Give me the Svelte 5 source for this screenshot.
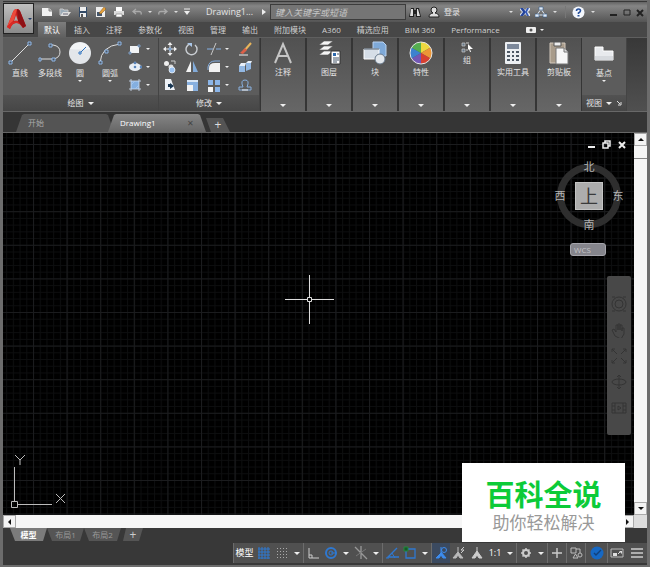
<script>
    let activeTab = $state('默认');
    let activeFile = $state('Drawing1');
    let activeLayout = $state('模型');
    let search = $state('');

    const tabs = [
        '默认', '插入', '注释', '参数化', '视图', '管理', '输出',
        '附加模块', 'A360', '精选应用', 'BIM 360', 'Performance',
    ];

    const drawTools = [
        { icon: 'line', label: '直线' },
        { icon: 'polyline', label: '多段线' },
        { icon: 'circle', label: '圆', more: true },
        { icon: 'arc', label: '圆弧', more: true },
    ];

    const shapeTools = ['rectangle', 'ellipse', 'hatch'];

    const modifyTools = [
        { icon: 'move', label: '移动' },
        { icon: 'rotate', label: '旋转' },
        { icon: 'trim', label: '修剪', more: true },
        { icon: 'erase', label: '删除' },
        { icon: 'copy', label: '复制' },
        { icon: 'mirror', label: '镜像' },
        { icon: 'fillet', label: '圆角', more: true },
        { icon: 'explode', label: '分解' },
        { icon: 'stretch', label: '拉伸' },
        { icon: 'scale', label: '缩放' },
        { icon: 'array', label: '阵列', more: true },
        { icon: 'offset', label: '偏移' },
    ];

    const panels = [
        { icon: 'text', label: '注释' },
        { icon: 'layers', label: '图层' },
        { icon: 'block', label: '块' },
        { icon: 'colors', label: '特性' },
        { icon: 'group', label: '组' },
        { icon: 'calculator', label: '实用工具' },
        { icon: 'clipboard', label: '剪贴板' },
    ];

    const quickTools = ['new', 'open', 'save', 'saveas', 'print'];

    const status = [
        [{ text: '模型' }, { icon: 'grid' }, { icon: 'snap' }, { drop: true }],
        [{ icon: 'ortho' }, { icon: 'polar' }, { drop: true }, { icon: 'iso' }, { drop: true }],
        [{ icon: 'track' }, { icon: 'osnap' }, { drop: true }],
        [{ icon: 'person', on: true }, { icon: 'personAuto' }, { icon: 'personScale' }, { text: '1:1' }, { drop: true }],
        [{ icon: 'gear' }, { drop: true }],
        [{ icon: 'plus' }],
        [{ icon: 'isolate' }],
        [{ icon: 'hardware', wide: true }],
        [{ icon: 'fullscreen' }, { icon: 'menu', wide: true }],
    ];

    // name: [width, height, svg body]
    const icons = {
        logo: [20, 22, '<path d="M1 19 7 4q1-3 4-3 2 0 3 2l6 15-3 2q-3-5-7-5-4 0-6 6z" fill="#c9201f"/><path d="M11 1q2 0 3 2l6 15-3 2-5-7z" fill="#8f1216"/><path d="M7 4q1-3 4-3L8 12l-7 7z" fill="#ec4a3c"/><path d="M10 7l2 6q-2-1-4 0z" fill="#a9a9a9"/><path d="M1 19q4-6 10-6l6 7q-3-5-7-5-4 0-6 6z" fill="#d92a25"/>'],
        new: [12, 12, '<path d="M1 2h7l3 3v5H1z" fill="#f2f2f2"/><path d="M8 2v3h3" fill="#bbb" stroke="#888"/>'],
        open: [12, 12, '<path d="M1 9V3h3l1 1h4v2" fill="#9aabb8" stroke="#c4c4c4"/><path d="M1 10l3-4h8l-3 4z" fill="#ddd"/><path d="M4 8h5" stroke="#667"/>'],
        save: [12, 12, '<path d="M2 1h8v10H2z" fill="#334a66"/><path d="M3 1h6v4H3zM3 7h6v4H3z" fill="#eee"/><path d="M4 8h2v3H4z" fill="#555"/>'],
        saveas: [12, 12, '<path d="M1 1h9v10H1z" fill="#eee"/><path d="M2 6h5v4H2z" fill="#45566b"/><path d="M4 7l5-6 2 2-5 5z" fill="#e6a13a" stroke="#7b5420" stroke-width=".5"/>'],
        print: [12, 12, '<path d="M3 1h6v4H3z" fill="#fff"/><path d="M1 5h10v4H1z" fill="#ddd"/><path d="M3 8h6v3H3z" fill="#fff" stroke="#777" stroke-width=".6"/>'],
        undo: [12, 12, '<path d="M5 3 2 5.500 5 8M2 5.500h6q3 0 2 3" fill="none" stroke="#aaa" stroke-width="1.300"/>'],
        redo: [12, 12, '<path d="M7 3l3 2.500L7 8M10 5.500H4q-3 0-2 3" fill="none" stroke="#aaa" stroke-width="1.300"/>'],
        custom: [8, 8, '<path d="M1 1h6" stroke="#eee"/><path d="M1 3h6L4 7z" fill="#eee"/>'],
        binoculars: [12, 12, '<path d="M2 2h3v2h2V2h3l2 9H7V8H5v3H0z" fill="#222"/><path d="M2 3h2v7H1zM8 3h1l2 7H8z" fill="#ddd"/>'],
        user: [12, 12, '<circle cx="6" cy="4" r="3" fill="#ddd" stroke="#222"/><path d="M1 11q0-4 5-4t5 4z" fill="#ddd" stroke="#222"/><path d="M5 5h2v3H5z" fill="#ddd"/>'],
        exchange: [12, 12, '<path d="M1 2h3l2 2 2-2h3v2L9 6l2 2v2H8L6 8l-2 2H1V8l2-2-2-2z" fill="#dde4ef"/><path d="M1 2h3l3 4-3 4H1l3-4z" fill="#24439b"/><path d="M8 2h2L8 6l2 4H8L6 6z" fill="#3659b5"/>'],
        share: [12, 12, '<path d="M6 3 2 9h8z" fill="none" stroke="#dfe8f2"/><path d="M4 1h4v3H4zM0 8h4v3H0zM8 8h4v3H8z" fill="#e2ebf5" stroke="#345a8f" stroke-width=".6"/>'],
        help: [13, 13, '<circle cx="6.500" cy="6.500" r="6" fill="#f4f7fc"/><path d="M4.500 5q0-2 2-2t2 1.700q0 1-2 2.300v1" fill="none" stroke="#27509b" stroke-width="1.600"/><path d="M5.500 9h2v1.500h-2z" fill="#27509b"/>'],
        minimize: [9, 9, '<path d="M1 7h7" stroke="currentColor" stroke-width="2"/>'],
        maximize: [9, 9, '<path d="M2 2h6v5H2z" fill="none" stroke="currentColor"/>'],
        restore: [9, 9, '<path d="M3 3V1h5v5H6M1 3h5v5H1z" fill="none" stroke="currentColor" stroke-width="1.500"/>'],
        close: [9, 9, '<path d="M2 2l6 6M8 2 2 8" stroke="currentColor" stroke-width="2"/>'],
        camera: [10, 6, '<rect width="10" height="6" rx="1" fill="#eee"/><circle cx="5" cy="3" r="1.500" fill="#555"/>'],
        line: [24, 24, '<path d="M2 22 22 2" stroke="#ddd"/><path d="M1 20h3v3H1zM20 1h3v3h-3z" fill="#4d5661" stroke="#8fb7e8"/>'],
        polyline: [24, 24, '<path d="M2 18h13q7-1 7-7t-7-7h-4" fill="none" stroke="#ddd"/><path d="M1 17h2v3H1zM14 17h3v3h-3zM11 3h3v3h-3z" fill="#4d5661" stroke="#8fb7e8"/>'],
        circle: [24, 24, '<circle cx="12" cy="12" r="11" fill="#e3e6ea"/><path d="M2 8a11 11 0 0 1 20 0q-9 1-20 0" fill="#f2f4f6"/><path d="M12 12l6-6" stroke="#2d71bd"/><path d="M11 11h2v2h-2z" fill="#fff" stroke="#2d71bd"/>'],
        arc: [24, 24, '<path d="M2 22Q3 5 22 3" fill="none" stroke="#ddd"/><path d="M1 20h3v3H1zM7 9h3v3H7zM20 1h3v3h-3z" fill="#4d5661" stroke="#8fb7e8"/>'],
        rectangle: [14, 14, '<path d="M2 4h9v7H2z" fill="#f1f3f5"/><path d="M1 10h2v2H1zM10 3h2v2h-2z" fill="#4d5661" stroke="#8fb7e8" stroke-width=".7"/>'],
        ellipse: [14, 14, '<ellipse cx="7" cy="7" rx="6" ry="4" fill="#e9eef4"/><path d="M6 2h2v2H6zM6 6h2v2H6zM12 6h2v2h-2z" fill="#335f94" stroke="#8fb7e8" stroke-width=".5"/>'],
        hatch: [14, 14, '<path d="M3 3h8v8H3z" fill="#84afe0"/><path d="M1 3h12M1 11h12M3 1v12M11 1v12" stroke="#cfe0f5" stroke-width=".8"/><path d="M3 7l4-4M7 11l4-4" stroke="#a9c8ec" stroke-width=".8"/>'],
        move: [14, 14, '<path d="M7 0l2.500 3h-5zM7 14l2.500-3h-5zM0 7l3-2.500v5zM14 7l-3-2.500v5z" fill="#f1f1f1"/><path d="M7 2v10M2 7h10" stroke="#eee"/><path d="M6 6h2v2H6z" fill="#4d5661" stroke="#8fb7e8"/>'],
        rotate: [14, 14, '<path d="M5 2a5.500 5.500 0 1 0 5 1" fill="none" stroke="#c9cdd2" stroke-width="1.400"/><path d="M2 1h5v4z" fill="#a9c6e8"/>'],
        trim: [14, 14, '<path d="M0 7h6M9 7h5" stroke="#84b0e5"/><path d="M9 1 4 13" stroke="#c7c7c7"/>'],
        erase: [14, 14, '<path d="M13 1 6 9" stroke="#e8b55c" stroke-width="2"/><path d="M7 6l2 2-4 4-3-1z" fill="#dd6048"/><path d="M1 13h9" stroke="#eee"/>'],
        copy: [14, 14, '<circle cx="3.500" cy="3.500" r="2.500" fill="#eee"/><circle cx="8" cy="7" r="2.500" fill="#ddd"/><circle cx="9" cy="10" r="3" fill="#9cc4f3" stroke="#fff" stroke-width=".7"/><path d="M8 1h4v3" fill="none" stroke="#ccc"/>'],
        mirror: [14, 14, '<path d="M6 1v11H1z" fill="#f3f3f3"/><path d="M8 1v11h5z" fill="#82abd9"/>'],
        fillet: [14, 14, '<path d="M2 12V8q0-5 6-5h5v9z" fill="#f1f1f1"/><path d="M1 10V7q1-6 7-6h5" fill="none" stroke="#85aee0"/>'],
        explode: [14, 14, '<path d="M1 6h6v6H1zM8 3l5-1v7l-5 2z" fill="#92b7e2"/><path d="M1 6l2-3h5l-1 3zM8 3l2-2h4l-1 2z" fill="#e7effa"/>'],
        stretch: [14, 14, '<path d="M2 1h6l4 11H2z" fill="#eef2f7"/><path d="M5 6h2V5l4 3-4 3V9H5z" fill="#183652"/>'],
        scale: [14, 14, '<path d="M2 2h11v11H8V7H2z" fill="#88b0df"/><path d="M2 7h6v6H2z" fill="#f3f3f3"/><path d="M2 2h11v2H2z" fill="#d9e6f5"/>'],
        array: [14, 14, '<path d="M1 2h5v5H1zM8 2h5v5H8zM8 9h5v5H8z" fill="#8bb5e8"/><path d="M1 9h5v5H1z" fill="#f3f3f3"/>'],
        offset: [14, 14, '<path d="M1 12h12V9H9q3-7-2-7T5 9H1z" fill="none" stroke="#88b0df"/><path d="M4 12h6" stroke="#eee"/>'],
        text: [24, 24, '<path d="M4 22 12 3l8 19M7 15h10" fill="none" stroke="#c6c6c6" stroke-width="2"/>'],
        layers: [24, 24, '<path d="M2 4l5-4h9l-5 4zM2 9l5-4h9l-5 4zM2 14l5-4h9l-5 4z" fill="#f4f4f4" stroke="#555" stroke-width=".6"/><path d="M14 10h9v13h-9z" fill="#fff" stroke="#333"/><path d="M16 12h3v3h-3z" fill="#2d69ad"/><path d="M20 13h2M16 17h6M16 19h6M16 21h4" stroke="#456"/>'],
        block: [24, 24, '<path d="M10 1h10l3 3v11H10z" fill="#7ea9d8" stroke="#b9d2ef"/><path d="M1 8h15v10H1z" fill="#d6dee7" stroke="#fff"/><path d="M1 8h15" stroke="#456"/><circle cx="17" cy="18" r="5" fill="#e2e7ec" stroke="#68798c"/>'],
        colors: [24, 24, '<path d="M12 12V1A11 11 0 0 1 21.500 6.500z" fill="#eed83f"/><path d="M12 12l9.500-5.500a11 11 0 0 1 0 11z" fill="#ed9636"/><path d="M12 12l9.500 5.500A11 11 0 0 1 12 23z" fill="#d84031"/><path d="M12 12v11a11 11 0 0 1-9.500-5.500z" fill="#7357b5"/><path d="M12 12l-9.500 5.500a11 11 0 0 1 0-11z" fill="#3d82cf"/><path d="M12 12 2.500 6.500A11 11 0 0 1 12 1z" fill="#55ae50"/><circle cx="12" cy="12" r="11" fill="none" stroke="#e6e6e6"/>'],
        group: [12, 12, '<path d="M1 2h3v3H1zM1 8h3v3H1z" fill="#678" stroke="#ccc" stroke-width=".7"/><path d="M5 2h3M5 9h2" stroke="#ccc"/><path d="M7 3l5 5H9l1 3H9L8 8 7 9z" fill="#fff"/>'],
        calculator: [24, 24, '<rect x="4" y="1" width="16" height="22" rx="1" fill="#eceff2"/><path d="M6 3h12v5H6z" fill="#7c889a"/><path d="M6 10h3v2H6zM11 10h2v2h-2zM15 10h3v2h-3zM6 14h3v2H6zM11 14h2v2h-2zM15 14h3v2h-3zM6 18h3v2H6zM11 18h2v2h-2zM15 18h3v2h-3z" fill="#4d5864"/>'],
        clipboard: [24, 24, '<path d="M3 2h15v20H3z" fill="#a99c8b" stroke="#d2c8bc"/><path d="M7 1h7v4H7z" fill="#eee" stroke="#555"/><path d="M9 7h8l4 4v12H9z" fill="#f7f7f7" stroke="#777"/><path d="M17 7v4h4" fill="#ddd" stroke="#777"/>'],
        base: [24, 24, '<path d="M3 6h8v4h10v9H3z" fill="#e8eaed" stroke="#fff"/><path d="M3 15h18v4H3z" fill="#d7dade"/>'],
        launcher: [6, 6, '<path d="M1 1l3 3M5 2v3H2" fill="none" stroke="#ddd"/>'],
        grid: [14, 14, '<path d="M2 1v12M5 1v12M8 1v12M11 1v12M1 3h12M1 6h12M1 9h12M1 12h12" stroke="#2f78d0"/>'],
        snap: [14, 14, '<path d="M2 2.500h11M2 5.500h11M2 8.500h11M2 11.500h11" stroke="#aaa" stroke-dasharray="1 2"/>'],
        ortho: [14, 14, '<path d="M3 2v10h10M3 9h3v3" fill="none" stroke="#ccc"/>'],
        polar: [14, 14, '<circle cx="7" cy="7" r="5" fill="none" stroke="#2f78d0" stroke-width="2"/><circle cx="7" cy="7" r="2" fill="none" stroke="#2f78d0"/><path d="M7 7h6" stroke="#2f78d0"/>'],
        iso: [14, 14, '<path d="M1 1l12 12M7 0v13" stroke="#999" stroke-width="1.300"/><path d="M12 3 2 10" stroke="#777"/>'],
        track: [14, 14, '<path d="M12 2 3 11h11" fill="none" stroke="#2f78d0" stroke-width="1.400"/><path d="M1 12h3M7 7l3 5" stroke="#2f78d0"/>'],
        osnap: [14, 14, '<path d="M3 3h9v9H3z" fill="none" stroke="#2f78d0" stroke-width="1.300"/><path d="M1 1h4v4H1z" fill="#195829" stroke="#238a3e"/>'],
        person: [14, 14, '<path d="M7 1v7M7 7l-5 5h3l2-3 2 3h3L7 6" fill="#3c8cf0" stroke="#3c8cf0"/><circle cx="10" cy="4" r="2.500" fill="none" stroke="#3c8cf0"/>'],
        personAuto: [14, 14, '<path d="M6 1v7M6 6l-5 6h3l2-3 2 3h3L6 6" fill="#bbb" stroke="#bbb"/><path d="M12 1 9 4h3L9 7" fill="none" stroke="#ccc"/>'],
        personScale: [14, 14, '<path d="M7 1v7M7 5l-5 7h3l2-3 2 3h3L7 5" fill="#ccc" stroke="#ccc"/>'],
        gear: [14, 14, '<circle cx="7" cy="7" r="3" fill="none" stroke="#ccc" stroke-width="2"/><path d="M7 2v2M7 10v2M2 7h2M10 7h2M3.500 3.500l1.500 1.500M9 9l1.500 1.500M10.500 3.500 9 5M5 9l-1.500 1.500" stroke="#ccc" stroke-width="1.500"/>'],
        plus: [14, 14, '<path d="M7 2v10M2 7h10" stroke="#ccc" stroke-width="1.400"/>'],
        isolate: [14, 14, '<path d="M2 2h5v5H2zM7 3h4v4" fill="none" stroke="#bbb"/><circle cx="11" cy="9" r="2" fill="none" stroke="#bbb"/><path d="M4 12h5L6.500 8z" fill="none" stroke="#bbb"/>'],
        hardware: [14, 14, '<circle cx="7" cy="7" r="6.500" fill="#1668c4"/><path d="M4 7l2 2 5-5" fill="none" stroke="#12407a" stroke-width="1.400"/>'],
        fullscreen: [14, 14, '<path d="M1 3h12v8H1z" fill="none" stroke="#bbb"/><path d="M3 7h4v3H3zM9 5h3v3z" fill="#ddd"/><path d="M8 8l3-3" stroke="#ddd"/>'],
        menu: [14, 14, '<path d="M1 3h12M1 7h12M1 11h12" stroke="#ccc" stroke-width="1.400"/>'],
        wheel: [16, 16, '<circle cx="8" cy="8" r="7" fill="none" stroke="#343434"/><circle cx="8" cy="8" r="4" fill="none" stroke="#343434"/><path d="M1 1h3M12 1h3M1 15h3M12 15h3" stroke="#343434"/>'],
        pan: [16, 16, '<path d="M4 14 1 8l2-1 2 3V3h2v5-6h2v6-5h2v6-3h2v6l-3 5z" fill="none" stroke="#343434"/>'],
        zoom: [16, 16, '<path d="M1 1l5 5M15 1l-5 5M1 15l5-5M15 15l-5-5M1 4V1h3M12 1h3v3M4 15H1v-3M12 15h3v-3" fill="none" stroke="#343434"/>'],
        orbit: [16, 16, '<ellipse cx="8" cy="8" rx="7" ry="3" fill="none" stroke="#343434"/><path d="M8 1v14M6 3l2-2 2 2M6 13l2 2 2-2" fill="none" stroke="#343434"/>'],
        motion: [16, 16, '<path d="M1 3h14v10H1zM4 3v10M12 3v10M1 6h3M1 10h3M12 6h3M12 10h3M7 6l3 2-3 2z" fill="none" stroke="#343434"/>'],
    };
</script>

{#snippet icon(name)}
    <svg width={icons[name][0]} height={icons[name][1]} viewBox="0 0 {icons[name][0]} {icons[name][1]}" aria-hidden="true">
        {@html icons[name][2]}
    </svg>
{/snippet}

<div class="window">
    <button class="app-button" aria-label="应用程序菜单">
        {@render icon('logo')}
        <span class="arrow small dark"></span>
    </button>

    <header class="titlebar">
        <div class="quick">
            {#each quickTools as name}
                <button aria-label={name}>{@render icon(name)}</button>
            {/each}
            <button aria-label="undo">{@render icon('undo')}</button>
            <button class="dot" aria-label="undo list"></button>
            <button aria-label="redo">{@render icon('redo')}</button>
            <button class="dot" aria-label="redo list"></button>
            <button class="custom" aria-label="customize">{@render icon('custom')}</button>
        </div>
        <span class="doc-title">Drawing1...</span>
        <span class="arrow-right"></span>
        <input class="search" type="text" placeholder="键入关键字或短语" aria-label="搜索" bind:value={search} />
        <button class="find" aria-label="find">{@render icon('binoculars')}</button>
        <button class="login">{@render icon('user')}登录</button>
        <div class="account">
            <button class="dot" aria-label="account list"></button>
            <button aria-label="exchange">{@render icon('exchange')}</button>
            <button aria-label="A360">{@render icon('share')}</button>
            <button class="dot" aria-label="A360 list"></button>
            <span class="divider"></span>
            <button aria-label="help">{@render icon('help')}</button>
            <button class="dot" aria-label="help list"></button>
        </div>
        <div class="window-controls">
            <button aria-label="minimize">{@render icon('minimize')}</button>
            <button aria-label="maximize">{@render icon('maximize')}</button>
            <button aria-label="close">{@render icon('close')}</button>
        </div>
    </header>

    <nav class="tabs">
        {#each tabs as tab}
            <button class:active={tab === activeTab} onclick={() => (activeTab = tab)}>{tab}</button>
        {/each}
        <button class="camera" aria-label="ribbon display">
            {@render icon('camera')}
            <span class="arrow small"></span>
        </button>
    </nav>

    <div class="ribbon">
        <section class="panel draw">
            <div class="panel-body">
                {#each drawTools as tool}
                    <button class="tool">
                        {@render icon(tool.icon)}
                        <span>{tool.label}</span>
                        {#if tool.more}<span class="arrow small"></span>{/if}
                    </button>
                {/each}
                <div class="shapes">
                    {#each shapeTools as name}
                        <button class="mini" aria-label={name}>{@render icon(name)}<span class="arrow small"></span></button>
                    {/each}
                </div>
            </div>
            <button class="panel-title">绘图 <span class="arrow"></span></button>
        </section>

        <section class="panel modify">
            <div class="panel-body modify-grid">
                {#each modifyTools as tool}
                    <button class="mini" aria-label={tool.label}>
                        {@render icon(tool.icon)}
                        {#if tool.more}<span class="arrow small"></span>{/if}
                    </button>
                {/each}
            </div>
            <button class="panel-title">修改 <span class="arrow"></span></button>
        </section>

        {#each panels as panel}
            <button class="collapsed">
                {@render icon(panel.icon)}
                <span>{panel.label}</span>
                <span class="arrow"></span>
            </button>
        {/each}

        <section class="panel base">
            <div class="panel-body">
                <button class="tool">
                    {@render icon('base')}
                    <span>基点</span>
                    <span class="arrow small"></span>
                </button>
            </div>
            <button class="panel-title">视图 <span class="arrow"></span>{@render icon('launcher')}</button>
        </section>
    </div>

    <div class="files">
        {#each ['开始', 'Drawing1'] as file}
            <button class="file" class:active={file === activeFile} onclick={() => (activeFile = file)}>
                <span>{file}</span>
                {#if file === activeFile}<span class="x">✕</span>{/if}
            </button>
        {/each}
        <button class="file add" aria-label="new drawing">+</button>
    </div>

    <main class="workspace">
        <div class="canvas">
            <svg class="lines" width="100%" height="100%" aria-hidden="true">
                <defs>
                    <pattern id="minor" x="30" y="11" width="6.72" height="6.72" patternUnits="userSpaceOnUse">
                        <path d="M.5 0v6.720M0 .5h6.720" stroke="#0d0e0f" />
                    </pattern>
                    <pattern id="major" x="30" y="11" width="33.6" height="33.6" patternUnits="userSpaceOnUse">
                        <path d="M.5 0v33.600M0 .5h33.600" stroke="#1b1c1e" />
                    </pattern>
                </defs>
                <rect width="100%" height="100%" fill="url(#minor)" />
                <rect width="100%" height="100%" fill="url(#major)" />
            </svg>

            <svg class="crosshair" width="49" height="49" aria-hidden="true">
                <path d="M0 24.500h22M27 24.500h22M24.500 0v22M24.500 27v22M22.500 22.500h4v4h-4z" fill="none" stroke="#ddd" />
            </svg>

            <svg class="ucs" width="60" height="60" aria-hidden="true">
                <path d="M5.500 13v34M8 50.500h35M2.500 47.500h6v6h-6zM6 1l5 5 5-5M11 6v5M47 40l9 9M56 40l-9 9" fill="none" stroke="#bbb" />
            </svg>

            <div class="doc-controls">
                <button aria-label="minimize drawing">{@render icon('minimize')}</button>
                <button aria-label="restore drawing">{@render icon('restore')}</button>
                <button aria-label="close drawing">{@render icon('close')}</button>
            </div>

            <div class="cube">
                <div class="ring"></div>
                <button class="n">北</button>
                <button class="w">西</button>
                <button class="top">上</button>
                <button class="e">东</button>
                <button class="s">南</button>
            </div>
            <button class="wcs">WCS</button>

            <div class="navbar">
                {#each ['wheel', 'pan', 'zoom', 'orbit', 'motion'] as name}
                    <button aria-label={name}>{@render icon(name)}</button>
                {/each}
            </div>
        </div>

        <div class="scroll vertical">
            <button aria-label="scroll up"><span class="tri up"></span></button>
            <span class="thumb"></span>
            <button class="last" aria-label="scroll down"><span class="tri down"></span></button>
        </div>
        <div class="scroll horizontal">
            <button aria-label="scroll left"><span class="tri left"></span></button>
            <button class="last" aria-label="scroll right"><span class="tri right"></span></button>
        </div>
        <div class="corner"></div>
    </main>

    <div class="layouts">
        {#each ['模型', '布局1', '布局2'] as layout}
            <button class:active={layout === activeLayout} onclick={() => (activeLayout = layout)}>{layout}</button>
        {/each}
        <button class="add" aria-label="new layout">+</button>
    </div>

    <footer class="statusbar">
        {#each status as group}
            <div class="status-group">
                {#each group as item}
                    {#if item.drop}
                        <button class="drop" aria-label="options"><span class="arrow"></span></button>
                    {:else if item.text}
                        <button class="label" class:wide={item.text === '模型'}>{item.text}</button>
                    {:else}
                        <button class:on={item.on} class:wide={item.wide} aria-label={item.icon}>{@render icon(item.icon)}</button>
                    {/if}
                {/each}
            </div>
        {/each}
    </footer>

    <aside class="banner">
        <strong>百科全说</strong>
        <span>助你轻松解决</span>
    </aside>
</div>

<style>
    :global(body) {
        background: #383838;
    }

    .window {
        position: relative;
        display: flex;
        flex-direction: column;
        box-sizing: border-box;
        min-height: 100vh;
        padding: 1px 0 2px;
        border: solid #6c6c6c;
        border-width: 1px 3px 2px;
        background: #383838;
        color: #e4e4e4;
        font-family: "Open Sans", "Noto Sans CJK SC", sans-serif;
        font-size: 8px;
        line-height: 12px;
    }

    button {
        display: flex;
        align-items: center;
        justify-content: center;
        flex-shrink: 0;
        margin: 0;
        padding: 0;
        border: 0;
        background: none;
        color: inherit;
        font: inherit;
        white-space: nowrap;
    }

    svg {
        display: block;
        flex-shrink: 0;
    }

    /* Arrows */
    .arrow {
        display: inline-block;
        flex-shrink: 0;
        border: 3px solid transparent;
        border-top-color: #eee;
        border-bottom: 0;
    }

    .arrow.small {
        border-width: 2px 2px 0;
    }

    .arrow.dark {
        border-top-color: #223a66;
    }

    .arrow-right {
        border: 3px solid transparent;
        border-left: 4px solid #eee;
        border-right: 0;
    }

    /* Title bar */
    .app-button {
        position: absolute;
        top: 2px;
        left: 0;
        z-index: 2;
        gap: 2px;
        width: 31px;
        height: 31px;
        border: 1px solid #222;
        background: linear-gradient(#c0c0c0, #8a8a8a);
    }

    .titlebar {
        display: flex;
        align-items: center;
        height: 20px;
        padding-left: 35px;
        background: linear-gradient(#646464, #858585 20%, #555);
    }

    .quick,
    .account,
    .window-controls {
        display: flex;
        align-items: center;
    }

    .quick button {
        width: 18px;
    }

    .quick .dot,
    .account .dot {
        width: 8px;
    }

    .dot::after {
        content: "";
        border: 2px solid transparent;
        border-top-color: #ddd;
        border-bottom: 0;
    }

    .quick .custom {
        width: 14px;
    }

    .doc-title {
        width: 56px;
        margin-left: 12px;
        font-size: 9px;
    }

    .search {
        flex: 1 1 134px;
        min-width: 0;
        max-width: 136px;
        height: 16px;
        box-sizing: border-box;
        margin: 0 3px 0 4px;
        padding: 0 4px;
        border: 1px solid #3c3c3c;
        background: #757575;
        color: #eee;
        font: italic 9px/12px "Open Sans", "Noto Sans CJK SC", sans-serif;
    }

    .search::placeholder {
        color: #c6c6c6;
        opacity: 1;
    }

    .login {
        gap: 4px;
        margin-left: 7px;
    }

    .account {
        gap: 4px;
        margin-left: auto;
    }

    .divider {
        width: 1px;
        height: 12px;
        margin: 0 2px;
        background: #777;
    }

    .window-controls {
        gap: 4px;
        margin: 0 3px 0 12px;
        color: #222;
    }

    /* Ribbon tabs */
    .tabs {
        display: flex;
        height: 15px;
        padding-left: 35px;
        background: #474747;
        border-bottom: 1px solid #5f5f5f;
    }

    .tabs button {
        padding: 0 8px;
        color: #d0d0d0;
    }

    .tabs .active {
        padding: 0 6px;
        background: linear-gradient(#7d7d7d, #606060);
        color: #fff;
    }

    .tabs .camera {
        gap: 4px;
        margin-left: 10px;
    }

    /* Ribbon */
    .ribbon {
        display: flex;
        height: 73px;
        border-bottom: 1px solid #686868;
        background: linear-gradient(#383838, #505050);
    }

    .panel {
        display: flex;
        flex-direction: column;
        flex-shrink: 0;
        border-right: 1px solid #444;
        background: #5c5c5c;
    }

    .draw {
        width: 155px;
    }

    .modify {
        width: 100px;
    }

    .base {
        width: 44px;
    }

    .panel-body {
        display: flex;
        flex: 1;
        padding-left: 2px;
    }

    .base .panel-body {
        justify-content: center;
        padding: 0;
    }

    .panel-title {
        gap: 4px;
        height: 16px;
        background: linear-gradient(#525252, #464646);
    }

    .tool {
        flex-direction: column;
        justify-content: flex-start;
        width: 30px;
        padding-top: 3px;
    }

    .tool > span:not(.arrow) {
        margin-top: 2px;
    }

    .tool .arrow {
        margin-top: 1px;
    }

    .mini {
        gap: 4px;
        justify-content: flex-start;
        height: 18px;
    }

    .shapes {
        padding: 2px 0 0 3px;
    }

    .modify-grid {
        display: grid;
        grid-template-columns: 22px 22px 31px 18px;
        grid-template-rows: repeat(3, 18px);
        padding: 2px 0 0 4px;
    }

    .collapsed {
        flex-direction: column;
        justify-content: flex-start;
        box-sizing: border-box;
        width: 46px;
        padding: 3px 0 4px;
        border: solid #353535;
        border-width: 0 1px;
        background: linear-gradient(#515151, #666);
    }

    .collapsed > span:not(.arrow) {
        margin-top: 1px;
    }

    .collapsed .arrow {
        margin-top: auto;
    }

    /* File tabs */
    .files {
        display: flex;
        align-items: flex-end;
        height: 20px;
        padding-left: 13px;
        background: #353535;
        border-bottom: 1px solid #666;
    }

    .file {
        justify-content: space-between;
        box-sizing: border-box;
        width: 98px;
        height: 18px;
        padding: 0 12px;
        background: #545454;
        color: #aaa;
        clip-path: polygon(6px 1px, 8px 0, 90px 0, 92px 1px, 100% 100%, 0 100%);
    }

    .file.active {
        margin-left: -6px;
        background: linear-gradient(#858585, #666);
        color: #fff;
    }

    .file .x {
        color: #444;
    }

    .file.add {
        justify-content: center;
        width: 22px;
        height: 14px;
        color: #ddd;
        font-size: 12px;
        clip-path: polygon(0 0, 17px 0, 100% 100%, 5px 100%);
    }

    /* Drawing area */
    .workspace {
        display: grid;
        flex: 1;
        grid-template-columns: 1fr 13px;
        grid-template-rows: 1fr 13px;
    }

    .canvas {
        position: relative;
        min-height: 320px;
        overflow: hidden;
        background: #000;
    }

    .lines {
        position: absolute;
        inset: 0;
    }

    .crosshair {
        position: absolute;
        top: 142px;
        left: 282px;
    }

    .ucs {
        position: absolute;
        bottom: 1px;
        left: 6px;
    }

    .doc-controls {
        position: absolute;
        top: 7px;
        right: 8px;
        display: flex;
        gap: 6px;
        color: #eee;
    }

    .cube {
        position: absolute;
        top: 26px;
        right: 8px;
        display: grid;
        grid-template-columns: 16px 1fr 16px;
        grid-template-rows: 16px 1fr 16px;
        width: 74px;
        height: 74px;
        color: #b5b5b5;
        font-size: 11px;
    }

    .ring {
        position: absolute;
        inset: 5px;
        border: 7px solid #2e2e2e;
        border-radius: 50%;
    }

    .cube button {
        position: relative;
    }

    .n,
    .s {
        grid-column: 2;
    }

    .w {
        grid-column: 1;
    }

    .cube .top {
        place-self: center;
        width: 28px;
        height: 28px;
        border: 1px solid #c4c4c4;
        background: #adadad;
        color: #3a3a3a;
        font-size: 18px;
    }

    .wcs {
        position: absolute;
        top: 110px;
        right: 28px;
        justify-content: flex-start;
        width: 36px;
        height: 13px;
        padding-left: 3px;
        border: 1px solid #a5a5ac;
        border-radius: 3px;
        background: #85858c;
        color: #c4c4c8;
        box-sizing: border-box;
    }

    .navbar {
        position: absolute;
        top: 143px;
        right: 3px;
        display: flex;
        flex-direction: column;
        justify-content: center;
        gap: 10px;
        align-items: center;
        width: 24px;
        height: 159px;
        border-radius: 2px;
        background: #484848;
    }

    /* Scroll bars */
    .scroll {
        display: flex;
        background: #f6f6f6;
    }

    .vertical {
        flex-direction: column;
    }

    .scroll button {
        box-sizing: border-box;
        width: 13px;
        height: 13px;
        border: 1px solid #aaa;
        background: #f4f4f4;
    }

    .thumb {
        height: 12px;
        border-bottom: 1px solid #888;
    }

    .vertical .last {
        margin-top: auto;
    }

    .horizontal .last {
        margin-left: auto;
    }

    .tri {
        border: 3px solid transparent;
    }

    .tri.up {
        border-bottom-color: #111;
        border-top: 0;
    }

    .tri.down {
        border-top-color: #111;
        border-bottom: 0;
    }

    .tri.left {
        border-right-color: #111;
        border-left: 0;
    }

    .tri.right {
        border-left-color: #111;
        border-right: 0;
    }

    .corner {
        background: #ddd;
    }

    /* Layout tabs */
    .layouts {
        display: flex;
        height: 15px;
        padding-left: 7px;
    }

    .layouts button {
        width: 37px;
        height: 13px;
        background: #555;
        color: #999;
        clip-path: polygon(0 0, 100% 0, 33px 100%, 5px 100%);
    }

    .layouts .active {
        background: #7b7b7b;
        color: #fff;
        font-weight: 700;
    }

    .layouts .add {
        width: 20px;
        margin-left: 2px;
        color: #ccc;
        font-size: 12px;
        clip-path: polygon(3px 0, 100% 0, 16px 100%, 0 100%);
    }

    /* Status bar */
    .statusbar {
        display: flex;
        justify-content: flex-end;
        height: 20px;
    }

    .status-group {
        display: flex;
        border-left: 1px solid #6c6c6c;
        background: #505050;
    }

    .status-group button {
        width: 18px;
    }

    .status-group .drop {
        width: 12px;
    }

    .status-group .wide {
        width: 21px;
    }

    .status-group .label {
        color: #fff;
        font-size: 9px;
    }

    .status-group .on {
        background: #3b4a60;
    }

    /* Banner */
    .banner {
        position: absolute;
        right: 22px;
        bottom: 23px;
        display: flex;
        flex-direction: column;
        align-items: center;
        justify-content: center;
        box-sizing: border-box;
        width: 163px;
        height: 79px;
        padding-top: 8px;
        background: #fff;
        color: #999;
        font-family: "Liberation Sans", "Noto Sans CJK SC", sans-serif;
        font-size: 17px;
        line-height: 22px;
    }

    .banner strong {
        color: #0ccb38;
        font-size: 29px;
        font-weight: 700;
        line-height: 34px;
    }
</style>
